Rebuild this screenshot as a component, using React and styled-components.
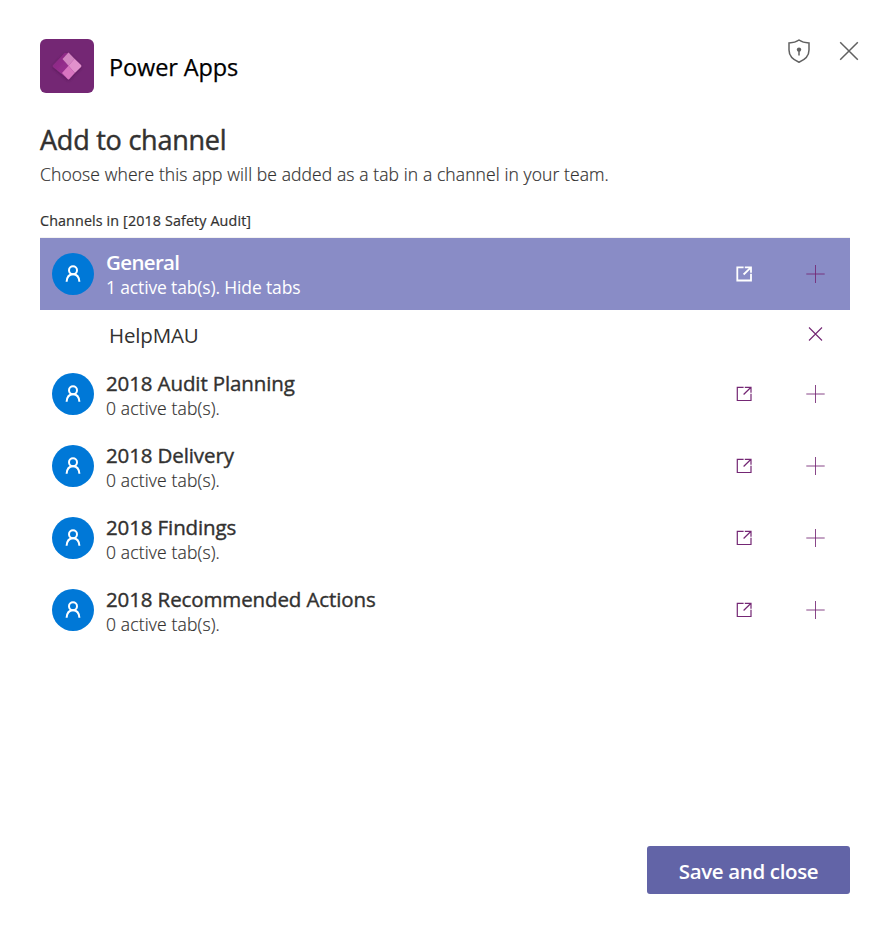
import React from "react";
import styled, { createGlobalStyle } from "styled-components";

const Global = createGlobalStyle`
  * { box-sizing: border-box; }
  body { margin: 0; background: #fff; }
`;

const Dialog = styled.main`
  display: flex;
  flex-direction: column;
  width: 889px;
  height: 937px;
  padding: 39px 39px 43px 40px;
  background: #fff;
  color: #323130;
  font-family: "Open Sans", "Noto Sans", sans-serif;
`;

const Header = styled.header`
  display: flex;
  align-items: flex-start;
  height: 54px;
  margin-right: -11px;
`;

const AppLogo = styled.svg`
  flex: none;
  width: 54px;
  height: 54px;
`;

const AppName = styled.h1`
  flex: 1;
  margin: 0 0 0 15px;
  font-size: 23.5px;
  line-height: 57px;
  font-weight: 400;
  color: #000;
  letter-spacing: -0.1px;
  -webkit-text-stroke: 0.25px currentColor;
`;

const HeaderActions = styled.div`
  display: flex;
  gap: 26px;
`;

const PlainButton = styled.button`
  display: grid;
  place-items: center;
  width: 24px;
  height: 24px;
  padding: 0;
  border: 0;
  background: none;
  color: #616161;

  svg { display: block; overflow: visible; }
`;

const Title = styled.h2`
  margin: 31px 0 0;
  font-size: 27px;
  line-height: 32px;
  font-weight: 400;
  letter-spacing: -0.23px;
  -webkit-text-stroke: 0.45px currentColor;
`;

const Description = styled.p`
  margin: 5px 0 0;
  font-size: 17.5px;
  line-height: 26px;
  font-weight: 300;
  letter-spacing: 0.1px;
  -webkit-text-stroke: 0.2px currentColor;
`;

const ListLabel = styled.h3`
  margin: 24px 0 0;
  font-size: 14.3px;
  line-height: 20px;
  font-weight: 400;
  letter-spacing: 0.13px;
  -webkit-text-stroke: 0.2px currentColor;
`;

const ChannelList = styled.ul`
  flex: 1;
  margin: 6px 0 0;
  padding: 0;
  border-top: 1px solid #f3f2f1;
  list-style: none;
`;

const Row = styled.div`
  display: flex;
  align-items: center;
  height: 72px;
  padding: 0 23px 0 12px;
  background: ${(p) => (p.$active ? "#898cc6" : "transparent")};
  color: ${(p) => (p.$active ? "#fff" : "#323130")};
`;

const Avatar = styled.span`
  display: grid;
  place-items: center;
  width: 42px;
  height: 42px;
  border-radius: 50%;
  background: #0078d7;
  color: #fff;
`;

const RowText = styled.div`
  flex: 1;
  margin-left: 12px;
  padding-top: ${(p) => (p.$active ? "2px" : "4px")};
`;

const ChannelName = styled.div`
  font-size: 20.5px;
  line-height: 25px;
  font-weight: ${(p) => (p.$active ? 600 : 400)};
  letter-spacing: ${(p) => (p.$active ? "-0.65px" : "-0.12px")};
  -webkit-text-stroke: ${(p) => (p.$active ? 0 : "0.38px")} currentColor;
`;

const ChannelStatus = styled.div`
  font-size: 17.5px;
  line-height: 25px;
  font-weight: ${(p) => (p.$active ? 400 : 300)};
  letter-spacing: ${(p) => (p.$active ? "-0.15px" : "0.15px")};
  -webkit-text-stroke: ${(p) => (p.$active ? 0 : "0.2px")} currentColor;
`;

const RowActions = styled.div`
  display: flex;
  gap: 47px;

  ${PlainButton} { color: #742774; }
  ${PlainButton}:first-child { color: ${(p) => (p.$active ? "#fff" : "#742774")}; }
`;

const TabRow = styled.div`
  display: flex;
  align-items: center;
  justify-content: space-between;
  height: 48px;
  padding: 0 23px 0 69px;

  ${PlainButton} { color: #742774; }
`;

const TabName = styled.span`
  padding-top: 2px;
  font-size: 20.5px;
  line-height: 28px;
  font-weight: 400;
  letter-spacing: -0.15px;
`;

const Footer = styled.footer`
  display: flex;
  justify-content: flex-end;
`;

const SaveButton = styled.button`
  width: 203px;
  height: 48px;
  padding: 2px 0 0;
  border: 0;
  border-radius: 3px;
  background: #6264a7;
  color: #fff;
  font-family: inherit;
  font-size: 20.5px;
  line-height: 28px;
  font-weight: 600;
  letter-spacing: -0.35px;
  white-space: nowrap;
`;

const PowerAppsLogo = () => (
  <AppLogo viewBox="0 0 54 54">
    <defs>
      <linearGradient id="left" x1="0" y1="0" x2="1" y2="1">
        <stop offset="0" stopColor="#862680" />
        <stop offset="1" stopColor="#a5369b" />
      </linearGradient>
      <filter id="shadow" x="-30%" y="-30%" width="160%" height="160%">
        <feDropShadow dx="0" dy="1" stdDeviation="1.6" floodColor="#3c0c3c" floodOpacity="0.5" />
      </filter>
    </defs>
    <rect width="54" height="54" rx="6" fill="#742774" />
    <g filter="url(#shadow)">
      <path d="M24.5 14 L28.5 14 L38 27 L28.5 40.5 L13 28 Q12.3 27 13 26.2 Z" fill="url(#left)" />
      <path d="M28.5 13.5 L34.5 19.7 L28.5 26.8 L22.5 20 Z" fill="#d285c1" />
      <path d="M34.5 19.7 L41 26 Q41.8 27 41 28 L34.8 34 L28.5 26.8 Z" fill="#e191cc" />
      <path d="M28.5 26.8 L34.8 34 L29.3 40 Q28.5 40.8 27.7 40 L22 34 Z" fill="#d874c0" />
    </g>
  </AppLogo>
);

const ShieldIcon = () => (
  <svg width="24" height="24" viewBox="0 0 24 24" fill="none" stroke="currentColor" strokeWidth="1.5">
    <path d="M12 1C9.2 3 5.600 3.800 2 4V11c0 6 4.200 9.800 10 12.200C17.800 20.800 22 17 22 11V4C18.400 3.800 14.800 3 12 1Z" />
    <circle cx="12" cy="10.600" r="2.200" fill="currentColor" stroke="none" />
    <path d="M12 11v5.400" />
  </svg>
);

const CloseIcon = () => (
  <svg width="24" height="24" viewBox="0 0 24 24" stroke="currentColor" strokeWidth="1.5">
    <path d="M3.200 3.200l17.600 17.600M20.800 3.200L3.200 20.800" />
  </svg>
);

const PersonIcon = () => (
  <svg width="18" height="18" viewBox="0 0 18 18" fill="none" stroke="currentColor" strokeWidth="2">
    <circle cx="9" cy="5.200" r="4" />
    <path d="M2.600 16.800C2.900 12.300 5.300 9.300 9 9.300S15.100 12.300 15.400 16.800" />
  </svg>
);

const OpenIcon = ({ bold }) => (
  <svg width="16" height="16" viewBox="0 0 16 16" fill="none" stroke="currentColor" strokeWidth={bold ? 1.8 : 1.2}>
    <path d="M7.600 1.300H1.300V14.500H15V7.700" />
    <path d="M8.800 1.300H15V6.700M15 1.300L7.600 8.500" />
  </svg>
);

const PlusIcon = () => (
  <svg width="20" height="20" viewBox="0 0 20 20" stroke="currentColor" strokeWidth="1" strokeOpacity="0.85">
    <path d="M10.500 1v18M1.300 10H19.700" />
  </svg>
);

const RemoveIcon = () => (
  <svg width="16" height="16" viewBox="0 0 16 16" stroke="currentColor" strokeWidth="1.100">
    <path d="M2 1.500l13 13M15 1.500L2 14.500" />
  </svg>
);

const channels = [
  { name: "General", status: "1 active tab(s). Hide tabs", active: true, tabs: ["HelpMAU"] },
  { name: "2018 Audit Planning", status: "0 active tab(s)." },
  { name: "2018 Delivery", status: "0 active tab(s)." },
  { name: "2018 Findings", status: "0 active tab(s)." },
  { name: "2018 Recommended Actions", status: "0 active tab(s)." },
];

const Channel = ({ name, status, active, tabs = [] }) => (
  <li>
    <Row $active={active}>
      <Avatar><PersonIcon /></Avatar>
      <RowText $active={active}>
        <ChannelName $active={active}>{name}</ChannelName>
        <ChannelStatus $active={active}>{status}</ChannelStatus>
      </RowText>
      <RowActions $active={active}>
        <PlainButton aria-label="Open channel"><OpenIcon bold={active} /></PlainButton>
        <PlainButton aria-label="Add tab"><PlusIcon /></PlainButton>
      </RowActions>
    </Row>
    {tabs.map((tab) => (
      <TabRow key={tab}>
        <TabName>{tab}</TabName>
        <PlainButton aria-label="Remove tab"><RemoveIcon /></PlainButton>
      </TabRow>
    ))}
  </li>
);

export default function App() {
  return (
    <>
      <Global />
      <Dialog>
        <Header>
          <PowerAppsLogo />
          <AppName>Power Apps</AppName>
          <HeaderActions>
            <PlainButton aria-label="Privacy"><ShieldIcon /></PlainButton>
            <PlainButton aria-label="Close"><CloseIcon /></PlainButton>
          </HeaderActions>
        </Header>
        <Title>Add to channel</Title>
        <Description>Choose where this app will be added as a tab in a channel in your team.</Description>
        <ListLabel>Channels in [2018 Safety Audit]</ListLabel>
        <ChannelList>
          {channels.map((c) => <Channel key={c.name} {...c} />)}
        </ChannelList>
        <Footer>
          <SaveButton>Save and close</SaveButton>
        </Footer>
      </Dialog>
    </>
  );
}
